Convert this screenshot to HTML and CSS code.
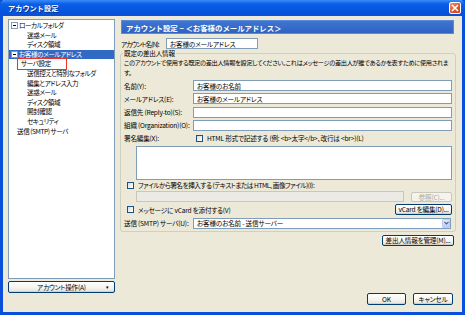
FILE: index.html
```html
<!DOCTYPE html>
<html lang="ja">
<head>
    <meta charset="UTF-8">
    <title>アカウント設定</title>
    <link rel="stylesheet" href="styles.css">
</head>
<body>
    <div class="window">
        <div class="titlebar">
            <span class="title">アカウント設定</span>
            <span class="close">
                <svg width="8" height="8" viewBox="0 0 8 8"><path d="M1 1L7 7M7 1L1 7" stroke="#fff" stroke-width="1.6"/></svg>
            </span>
        </div>
        <div class="main">
            <div class="left">
                <ul class="tree">
                    <li class="node"><span class="twisty"></span>ローカルフォルダ</li>
                    <li class="leaf">迷惑メール</li>
                    <li class="leaf">ディスク領域</li>
                    <li class="node selected"><span class="twisty"></span>お客様のメールアドレス</li>
                    <li class="leaf current">サーバ設定<span class="mark"></span></li>
                    <li class="leaf">送信控えと特別なフォルダ</li>
                    <li class="leaf">編集とアドレス入力</li>
                    <li class="leaf">迷惑メール</li>
                    <li class="leaf">ディスク領域</li>
                    <li class="leaf">開封確認</li>
                    <li class="leaf">セキュリティ</li>
                    <li class="root">送信 (SMTP) サーバ</li>
                </ul>
                <button class="btn account-btn">アカウント操作(A)<span class="arrow">▾</span></button>
            </div>

            <div class="right">
                <div class="header">アカウント設定 − ＜お客様のメールアドレス＞</div>
                <div class="name-row">
                    <label>アカウント名(N):</label>
                    <input type="text" class="text name" value="お客様のメールアドレス">
                </div>

                <fieldset class="group">
                    <legend>既定の差出人情報</legend>
                    <p class="desc">このアカウントで使用する既定の差出人情報を設定してください。これはメッセージの差出人が誰であるかを表すために使用されます。</p>
                    <div class="field">
                        <label>名前(Y):</label>
                        <input type="text" class="text" value="お客様のお名前">
                    </div>
                    <div class="field">
                        <label>メールアドレス(E):</label>
                        <input type="text" class="text" value="お客様のメールアドレス">
                    </div>
                    <div class="field">
                        <label>返信先 (Reply-to)(S):</label>
                        <input type="text" class="text">
                    </div>
                    <div class="field">
                        <label>組織 (Organization)(O):</label>
                        <input type="text" class="text">
                    </div>
                    <div class="field sig-head">
                        <label>署名編集(X):</label>
                        <span class="check"><span class="box"></span>HTML 形式で記述する (例: &lt;b&gt;太字&lt;/b&gt;、改行は &lt;br&gt;)(L)</span>
                    </div>
                    <textarea class="sig"></textarea>
                    <div class="check file-check"><span class="box"></span>ファイルから署名を挿入する (テキストまたは HTML、画像ファイル)(I):</div>
                    <div class="file-row">
                        <div class="file-input"></div>
                        <button class="btn disabled">参照(C)...</button>
                    </div>
                    <div class="vcard-row">
                        <span class="check"><span class="box"></span>メッセージに vCard を添付する(V)</span>
                        <button class="btn">vCard を編集(D)...</button>
                    </div>
                    <div class="field smtp">
                        <label>送信 (SMTP) サーバ(U):</label>
                        <div class="select">お客様のお名前 - 送信サーバー
                            <span class="drop">
                                <svg width="5" height="4" viewBox="0 0 5 4"><path d="M0.5 0.8L2.5 2.8L4.5 0.8" fill="none" stroke="#4d6185" stroke-width="1.2"/></svg>
                            </span>
                        </div>
                    </div>
                </fieldset>

                <div class="manage">
                    <button class="btn">差出人情報を管理(M)...</button>
                </div>

                <div class="footer">
                    <button class="btn ok">OK</button>
                    <button class="btn cancel">キャンセル</button>
                </div>
            </div>
        </div>
    </div>
</body>
</html>
```

FILE: styles.css
```css
body {
    margin: 0;
    font-family: "Noto Sans CJK JP", "Noto Sans", sans-serif;
    font-size: 6.6px;
    letter-spacing: -0.2px;
    font-feature-settings: "palt";
    color: #000;
}
.window {
    width: 465px;
    height: 315px;
    box-sizing: border-box;
    border: 3px solid #0a4fdc;
    border-top: none;
    display: flex;
    flex-direction: column;
    background: #ece9d8;
}
.titlebar {
    height: 16px;
    margin: 0 -3px;
    padding: 0 3px 0 8px;
    display: flex;
    align-items: center;
    justify-content: space-between;
    background: linear-gradient(#3b8cf7, #0a5fe6 25%, #0554e0 70%, #0a4fd6);
    border-radius: 5px 5px 0 0;
}
.title {
    color: #fff;
    font-size: 7.2px;
    font-weight: bold;
    letter-spacing: 0;
    font-feature-settings: normal;
    text-shadow: 1px 1px 0 #0a2f8f;
}
.close {
    width: 10px;
    height: 10px;
    margin-right: 1px;
    border: 1px solid #fff;
    border-radius: 2px;
    background: linear-gradient(135deg, #f09a7e, #e2572c 50%, #cc4418);
    display: flex;
    align-items: center;
    justify-content: center;
}
.main {
    flex: 1;
    display: flex;
    gap: 5px;
    padding: 3px 6px 7px 5px;
}

/* 左側のツリー */
.left {
    width: 107px;
    display: flex;
    flex-direction: column;
    gap: 2px;
}
.tree {
    list-style: none;
    margin: 0;
    padding: 1px 0 0;
    height: 260px;
    box-sizing: border-box;
    background: #fff;
    border: 1px solid #7f9db9;
    letter-spacing: -0.45px;
}
.tree li {
    position: relative;
    height: 9.6px;
    line-height: 9.6px;
    white-space: nowrap;
}
.tree .node {
    padding-left: 2px;
    display: flex;
    align-items: center;
}
.tree .root {
    padding-left: 8px;
}
.tree .leaf {
    padding-left: 18px;
}
.tree .current {
    padding-left: 12px;
}
.tree .selected {
    background: #316ac5;
    color: #fff;
}
.twisty {
    width: 5px;
    height: 5px;
    margin-right: 1px;
    border: 1px solid #8a9aac;
    background: #fff;
    position: relative;
    flex: none;
}
.twisty::after {
    content: "";
    position: absolute;
    left: 1px;
    top: 2px;
    width: 3px;
    height: 1px;
    background: #000;
}
.mark {
    position: absolute;
    left: 8px;
    top: -1px;
    width: 48px;
    height: 10px;
    border: 1px solid #e8322a;
}
.btn {
    font: inherit;
    font-feature-settings: "palt";
    letter-spacing: -0.2px;
    color: #000;
    padding: 0 4px;
    border: 1px solid #003c74;
    border-radius: 2px;
    background: linear-gradient(#ffffff, #f4f3ee 60%, #e3e0d5);
    box-shadow: inset 0 -1px 0 #d6d0c5;
    white-space: nowrap;
}
.account-btn {
    height: 12px;
    position: relative;
    padding: 0;
    line-height: 10px;
}
.account-btn .arrow {
    position: absolute;
    right: 5px;
    top: 0;
    font-size: 5px;
}

/* 右側 */
.right {
    flex: 1;
    display: flex;
    flex-direction: column;
    padding-top: 1px;
}
.header {
    height: 14px;
    margin: 0 2px 0 1px;
    padding-left: 4px;
    line-height: 13px;
    color: #fff;
    font-size: 7.4px;
    font-weight: bold;
    letter-spacing: 0;
    font-feature-settings: normal;
    background: linear-gradient(#3f74d0, #2f63c1);
    border: 1px solid #5a8ad8;
    box-sizing: border-box;
}
.name-row {
    display: flex;
    align-items: center;
    margin-top: 4px;
    padding-left: 1px;
}
.name-row label {
    width: 45px;
    white-space: nowrap;
    letter-spacing: -0.9px;
}
.text {
    font: inherit;
    font-feature-settings: "palt";
    letter-spacing: -0.2px;
    height: 11px;
    box-sizing: border-box;
    padding: 0 3px;
    border: 1px solid #7f9db9;
    background: #fff;
    outline: none;
}
.text.name {
    width: 92px;
}
.group {
    margin: 0;
    padding: 0 3px 2px 3px;
    border: 1px solid #d0d0bf;
    border-radius: 3px;
    min-width: 0;
}
.group legend {
    padding: 0 1px;
    margin-left: -1px;
    line-height: 8px;
}
.desc {
    margin: 1px -2px 0 0;
    font-size: 6.2px;
    line-height: 9.5px;
    letter-spacing: -0.3px;
}
.field {
    display: flex;
    align-items: center;
    margin-top: 2.3px;
}
.field:first-of-type {
    margin-top: 3px;
}
.field label {
    width: 69px;
    flex: none;
    white-space: nowrap;
}
.field .text {
    flex: 1;
}
.sig-head {
    height: 11px;
    margin-top: 2px;
}
.check {
    display: flex;
    align-items: center;
    white-space: nowrap;
}
.box {
    width: 7px;
    height: 7px;
    box-sizing: border-box;
    margin-right: 4px;
    border: 1px solid #1c5180;
    background: linear-gradient(135deg, #dcdcd7, #fff);
    flex: none;
}
.sig-head .check {
    margin-left: 3px;
}
.sig {
    display: block;
    margin: 2px 0 0 12px;
    width: calc(100% - 12px);
    height: 34px;
    box-sizing: border-box;
    border: 1px solid #7f9db9;
    resize: none;
}
.file-check {
    margin: 1px 0 0 3px;
    height: 9px;
    letter-spacing: -0.45px;
}
.file-row {
    display: flex;
    align-items: center;
    gap: 7px;
    margin: 1px 0 0 12px;
    height: 12px;
}
.file-input {
    flex: 1;
    height: 9px;
    border: 1px solid #c9c7ba;
    background: #ebeae4;
}
.btn.disabled {
    height: 10px;
    width: 41px;
    color: #aca899;
    border-color: #c9c7ba;
    background: #f4f3ee;
    box-shadow: none;
    line-height: 8px;
}
.vcard-row {
    display: flex;
    align-items: center;
    justify-content: space-between;
    margin: 1px 0 0 3px;
    height: 12px;
}
.vcard-row .btn {
    height: 11px;
    width: 57px;
    line-height: 9px;
    padding: 0;
}
.smtp {
    margin-top: 2px;
}
.select {
    flex: 1;
    height: 11px;
    box-sizing: border-box;
    padding-left: 3px;
    margin-right: 1px;
    border: 1px solid #7f9db9;
    background: #fff;
    line-height: 9px;
    position: relative;
}
.drop {
    position: absolute;
    right: 0;
    top: 0;
    width: 8px;
    height: 9px;
    box-sizing: border-box;
    border: 1px solid #b9cdf4;
    border-radius: 1px;
    background: linear-gradient(#e2ebfd, #b8cdf7);
    display: flex;
    align-items: center;
    justify-content: center;
}
.manage {
    display: flex;
    justify-content: flex-end;
    margin-top: 3px;
    padding-right: 2px;
}
.manage .btn {
    height: 11px;
    width: 72px;
    padding: 0;
    line-height: 9px;
}
.footer {
    margin-top: auto;
    display: flex;
    justify-content: flex-end;
    gap: 7px;
    padding-right: 3px;
}
.footer .btn {
    height: 12px;
    padding: 0;
    line-height: 10px;
}
.footer .ok {
    width: 39px;
}
.footer .cancel {
    width: 40px;
}
```
